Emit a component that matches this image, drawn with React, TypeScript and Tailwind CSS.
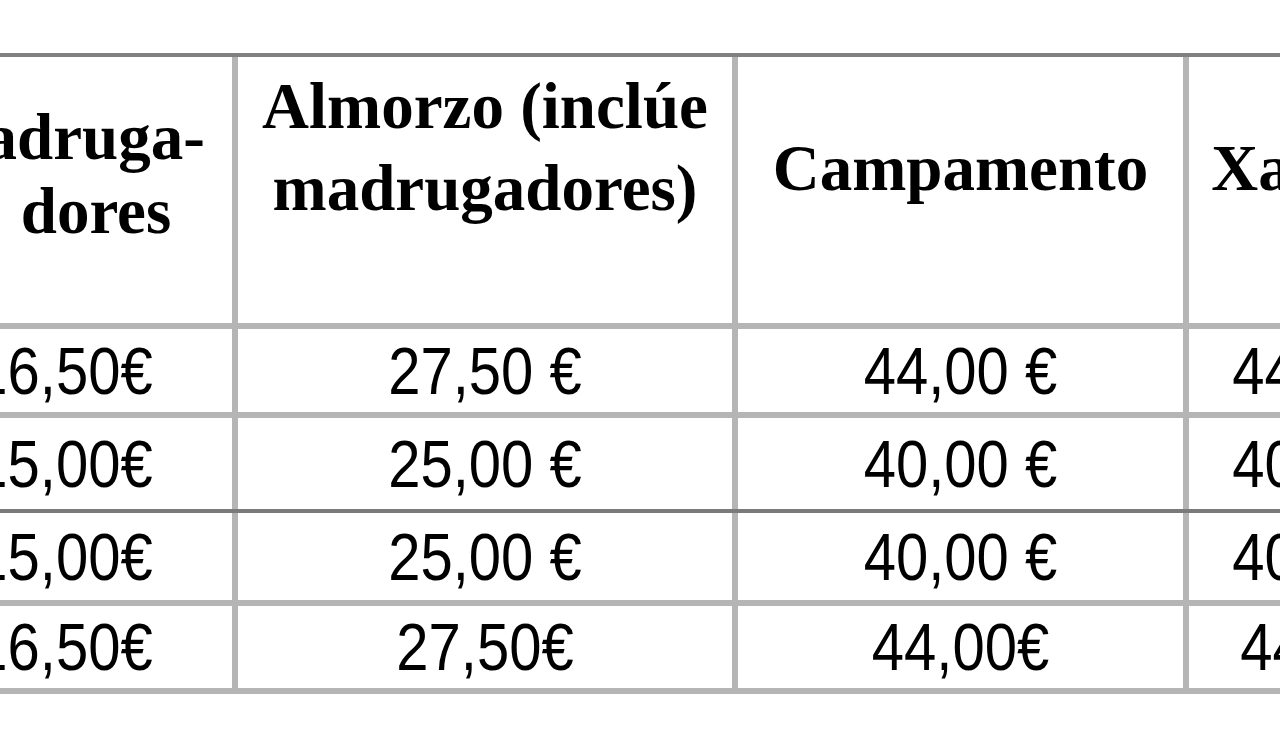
import React from "react";

const serif = "font-['Liberation_Serif','Times_New_Roman',serif] font-bold text-[65px] text-black";
const sans = "font-['Liberation_Sans',Arial,sans-serif] text-[58px] text-black";

function Val({ v }: { v: string }) {
  return <span className="inline-block scale-y-[1.15] whitespace-pre leading-none">{v}</span>;
}

type Row = { h: string; border: string; vals: string[] };

const rows: Row[] = [
  { h: "h-[89px]", border: "border-b-[6px] border-[#b5b5b5]", vals: ["16,50€", "27,50 €", "44,00 €", "44,00 €"] },
  { h: "h-[95px]", border: "border-b-[4px] border-[#7a7a7a]", vals: ["15,00€", "25,00 €", "40,00 €", "40,00 €"] },
  { h: "h-[93px]", border: "border-b-[6px] border-[#b5b5b5]", vals: ["15,00€", "25,00 €", "40,00 €", "40,00 €"] },
  { h: "h-[88px]", border: "border-b-[6px] border-[#b5b5b5]", vals: ["16,50€", "27,50€", "44,00€", "44,00€"] },
];

export default function App() {
  return (
    <div className="w-[1280px] h-[732px] overflow-hidden bg-white">
      <div className="pt-[53px] -ml-[104px] w-[1700px]">
        <div className="border-t-4 border-[#808080]">
          {/* header */}
          <div className={`flex h-[272px] border-b-[6px] border-[#b5b5b5] ${serif}`}>
            <div className="w-[342px] border-r-[6px] border-[#b5b5b5] pt-[43px] leading-[74px]">
              <div className="text-center">Madruga-</div>
              <div className="text-center pl-[64px]">dores</div>
            </div>
            <div className="w-[500px] border-r-[6px] border-[#b5b5b5] pt-[8px] leading-[82px] text-center">
              <div>Almorzo (inclúe</div>
              <div>madrugadores)</div>
            </div>
            <div className="w-[451px] border-r-[6px] border-[#b5b5b5] pt-[70px] leading-[82px] text-center">
              Campamento
            </div>
            <div className="w-[280px] pt-[70px] pl-[16px] leading-[82px] text-center whitespace-nowrap">
              Xantares
            </div>
          </div>
          {rows.map((r, i) => (
            <div key={i} className={`flex ${r.h} ${r.border} ${sans}`}>
              <div className="w-[342px] border-r-[6px] border-[#b5b5b5] flex items-center justify-center">
                <Val v={r.vals[0]} />
              </div>
              <div className="w-[500px] border-r-[6px] border-[#b5b5b5] flex items-center justify-center">
                <Val v={r.vals[1]} />
              </div>
              <div className="w-[451px] border-r-[6px] border-[#b5b5b5] flex items-center justify-center">
                <Val v={r.vals[2]} />
              </div>
              <div className="w-[280px] flex items-center justify-center">
                <Val v={r.vals[3]} />
              </div>
            </div>
          ))}
        </div>
      </div>
    </div>
  );
}
